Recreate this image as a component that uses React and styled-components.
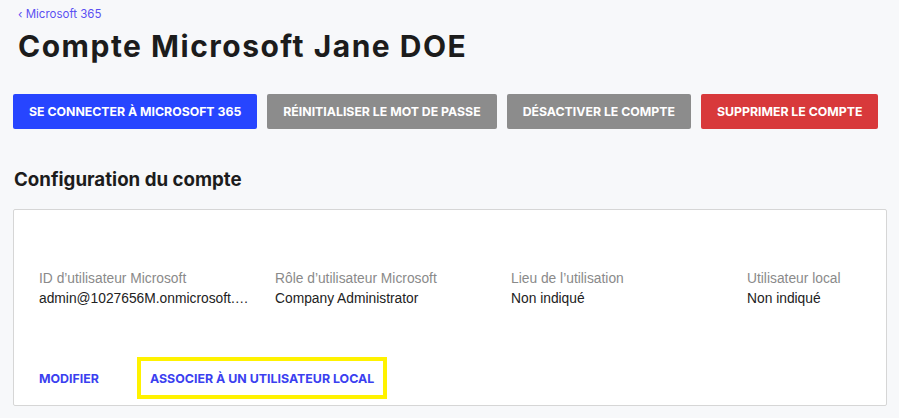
import React from 'react';
import styled, { createGlobalStyle } from 'styled-components';

const GlobalStyle = createGlobalStyle`
  body {
    margin: 0;
    background: #f7f8fa;
    font-family: Inter, "Liberation Sans", sans-serif;
    color: #1f1f1f;
  }
`;

const Page = styled.div`
  display: flex;
  flex-direction: column;
  padding: 7px 12px 0 13px;
`;

const Breadcrumb = styled.a`
  display: block;
  padding-left: 5px;
  font-size: 11.5px;
  line-height: 14px;
  color: #5b50f2;
  text-decoration: none;
`;

const Title = styled.h1`
  margin: 7px 0 0 5px;
  font-size: 30px;
  line-height: 36px;
  font-weight: 700;
  letter-spacing: 1.5px;
  color: #1c1c1c;
`;

const ButtonBar = styled.div`
  display: flex;
  gap: 10px;
  margin-top: 30px;
`;

const ActionButton = styled.button`
  flex-shrink: 0;
  height: 35px;
  padding: 0 16px;
  border: none;
  border-radius: 2px;
  font-family: Inter, "Liberation Sans", sans-serif;
  font-size: 12.3px;
  font-weight: 700;
  color: #fff;
  white-space: nowrap;
  text-transform: uppercase;
  background: ${({ $tone }) =>
    $tone === 'primary' ? '#2745ff' : $tone === 'danger' ? '#d8393b' : '#8c8c8c'};
`;

const SectionTitle = styled.h2`
  margin: 39px 0 0 1px;
  font-size: 18.7px;
  line-height: 24px;
  font-weight: 700;
  color: #1c1c1c;
`;

const Card = styled.section`
  margin-top: 17px;
  padding: 59px 25px 6px;
  background: #fff;
  border: 1px solid #d6d6d6;
  border-radius: 2px;
  overflow: hidden;
`;

const FieldGrid = styled.div`
  display: grid;
  grid-template-columns: repeat(4, 215px);
  column-gap: 21px;
`;

const Field = styled.div`
  display: flex;
  flex-direction: column;
  min-width: 0;
  font-family: "Liberation Sans", Arial, sans-serif;
  font-size: 13.8px;
  line-height: 20px;
`;

const Label = styled.span`
  color: #8a8a8a;
`;

const Value = styled.span`
  color: #222;
  white-space: nowrap;
  overflow: hidden;
  text-overflow: ellipsis;
`;

const LinkRow = styled.div`
  display: flex;
  gap: 25px;
  margin: 48px 0 0 -13px;
`;

const TextLink = styled.button`
  height: 42px;
  padding: 0 9px;
  background: none;
  border: 4px solid ${({ $highlight }) => ($highlight ? '#fff200' : 'transparent')};
  font-family: Inter, "Liberation Sans", sans-serif;
  font-size: 12.4px;
  font-weight: 700;
  color: #3b3ff0;
  white-space: nowrap;
  text-transform: uppercase;
`;

const fields = [
  { label: 'ID d’utilisateur Microsoft', value: 'admin@1027656M.onmicrosoft.com' },
  { label: 'Rôle d’utilisateur Microsoft', value: 'Company Administrator' },
  { label: 'Lieu de l’utilisation', value: 'Non indiqué' },
  { label: 'Utilisateur local', value: 'Non indiqué' },
];

export default function App() {
  return (
    <>
      <GlobalStyle />
      <Page>
        <Breadcrumb href="#">‹ Microsoft 365</Breadcrumb>
        <Title>Compte Microsoft Jane DOE</Title>

        {/* ACCOUNT ACTIONS */}
        <ButtonBar>
          <ActionButton $tone="primary">Se connecter à Microsoft 365</ActionButton>
          <ActionButton>Réinitialiser le mot de passe</ActionButton>
          <ActionButton>Désactiver le compte</ActionButton>
          <ActionButton $tone="danger">Supprimer le compte</ActionButton>
        </ButtonBar>

        <SectionTitle>Configuration du compte</SectionTitle>

        <Card>
          <FieldGrid>
            {fields.map((f) => (
              <Field key={f.label}>
                <Label>{f.label}</Label>
                <Value>{f.value}</Value>
              </Field>
            ))}
          </FieldGrid>

          <LinkRow>
            <TextLink>Modifier</TextLink>
            <TextLink $highlight>Associer à un utilisateur local</TextLink>
          </LinkRow>
        </Card>
      </Page>
    </>
  );
}
